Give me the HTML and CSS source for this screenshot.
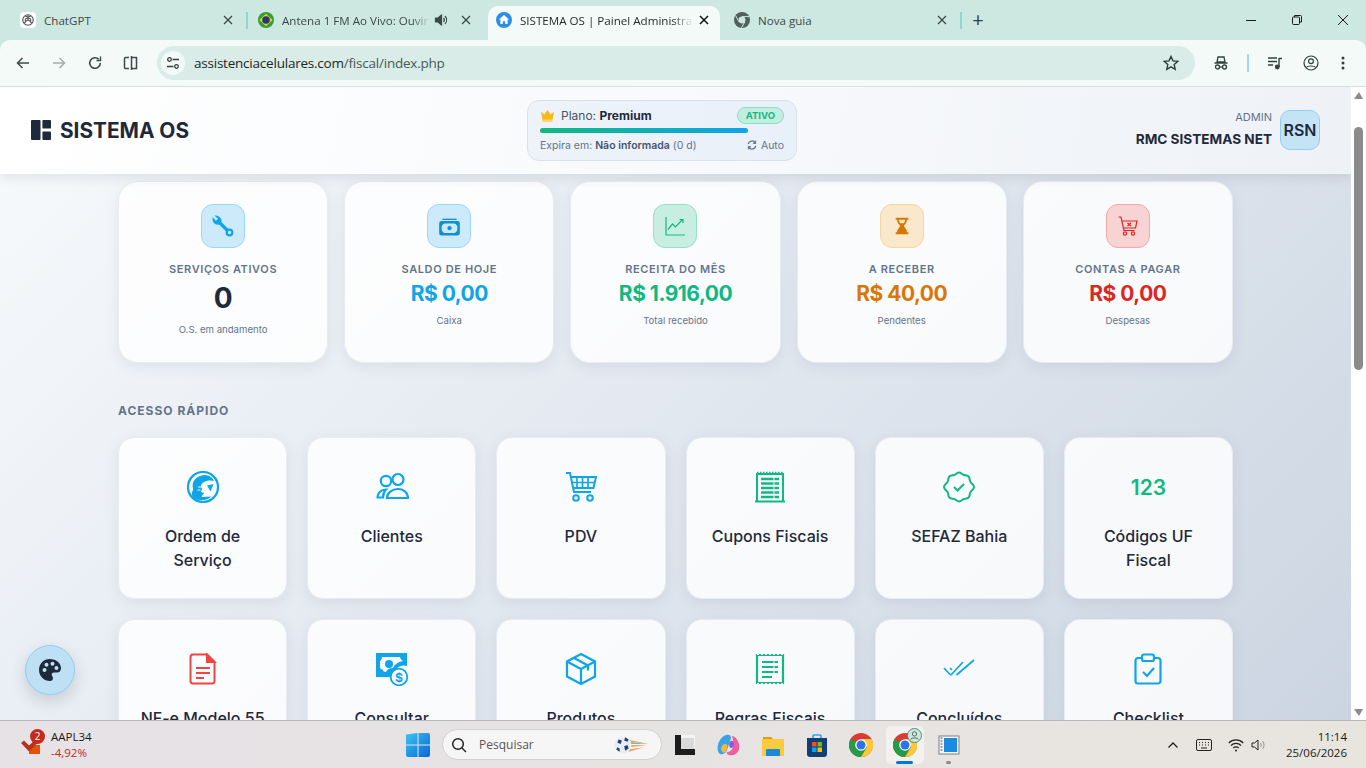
FILE: index.html
```html
<!DOCTYPE html>
<html lang="pt-BR">
<head>
<meta charset="utf-8">
<title>SISTEMA OS | Painel Administrativo</title>
<link rel="stylesheet" href="styles.css">
</head>
<body>
<div class="tabstrip">
  <div class="tab tab-sep">
    <span class="fav fav-white"><svg viewBox="0 0 16 16" width="14" height="14" fill="none" stroke="#555" stroke-width="1.3"><circle cx="8" cy="8" r="6"/><path d="M8 2v6l5 3M8 8l-5 3M5 3.5l6 3.5v4M11 3.5L5 7v4"/></svg></span>
    <span class="tab-title">ChatGPT</span>
    <svg class="tab-x" viewBox="0 0 10 10" width="10" height="10" fill="none" stroke="#3c4a47" stroke-width="1.3"><path d="m1 1 8 8M9 1 1 9"/></svg>
  </div>
  <div class="tab">
    <span class="fav"><svg viewBox="0 0 16 16" width="16" height="16"><circle cx="8" cy="8" r="8" fill="#2e9e3f"/><path d="M8 1.800 14.600 8 8 14.200 1.400 8z" fill="#f6d20e"/><circle cx="8" cy="8" r="3.800" fill="#26357f"/></svg></span>
    <span class="tab-title fade">Antena 1 FM Ao Vivo: Ouvir</span>
    <svg class="tab-audio" viewBox="0 0 14 14" width="14" height="14" fill="none" stroke="#3a4a47" stroke-width="1.200"><path d="M1.500 5v4h2.500l3.500 3V2L4 5z" fill="#3a4a47"/><path d="M9.500 5a3 3 0 0 1 0 4M11 3a6 6 0 0 1 0 8"/></svg>
    <svg class="tab-x" viewBox="0 0 10 10" width="10" height="10" fill="none" stroke="#3c4a47" stroke-width="1.300"><path d="m1 1 8 8M9 1 1 9"/></svg>
  </div>
  <div class="tab tab-active">
    <span class="fav"><svg viewBox="0 0 16 16" width="16" height="16"><circle cx="8" cy="8" r="8" fill="#2b8fe8"/><path d="M8 3 3 7.600h1.400V12h2.400V9.300h2.400V12h2.400V7.600H13z" fill="#fff"/></svg></span>
    <span class="tab-title fade">SISTEMA OS | Painel Administrativo</span>
    <svg class="tab-x" viewBox="0 0 10 10" width="10" height="10" fill="none" stroke="#111" stroke-width="1.500"><path d="m1 1 8 8M9 1 1 9"/></svg>
  </div>
  <div class="tab tab-sep">
    <span class="fav"><svg viewBox="0 0 16 16" width="16" height="16"><circle cx="8" cy="8" r="8" fill="#50605c"/><circle cx="8" cy="8" r="3.400" fill="#cde7e1"/><path d="M8 4.600h7M5 9.800 1.600 3.600M10.900 9.800 7.400 15.800" stroke="#cde7e1" stroke-width="1"/></svg></span>
    <span class="tab-title">Nova guia</span>
    <svg class="tab-x" viewBox="0 0 10 10" width="10" height="10" fill="none" stroke="#3c4a47" stroke-width="1.300"><path d="m1 1 8 8M9 1 1 9"/></svg>
  </div>
  <button class="newtab" type="button">+</button>
  <div class="winctl">
    <svg viewBox="0 0 12 12" width="12" height="12" stroke="#1c1c1c" fill="none"><path d="M1 6.500h10"/></svg>
    <svg viewBox="0 0 12 12" width="12" height="12" stroke="#1c1c1c" fill="none"><rect x="1.500" y="3" width="7" height="7.500" rx="1"/><path d="M3.500 3V1.500h6a1 1 0 0 1 1 1V8H8.500"/></svg>
    <svg viewBox="0 0 12 12" width="12" height="12" stroke="#1c1c1c" fill="none"><path d="M1 1l10 10M11 1 1 11"/></svg>
  </div>
</div>

<div class="toolbar">
  <div class="navbtns">
    <svg viewBox="0 0 16 16" width="16" height="16" fill="none" stroke="#3d4a47" stroke-width="1.500"><path d="M14 8H2.500M7.500 3 2.500 8l5 5"/></svg>
    <svg viewBox="0 0 16 16" width="16" height="16" fill="none" stroke="#a3aeab" stroke-width="1.500"><path d="M2 8h11.500M8.500 3l5 5-5 5"/></svg>
    <svg viewBox="0 0 16 16" width="16" height="16" fill="none" stroke="#3d4a47" stroke-width="1.600"><path d="M13.300 8a5.300 5.300 0 1 1-1.600-3.800"/><path d="M13.500 1.500v4h-4" stroke-width="1.400"/></svg>
    <svg viewBox="0 0 16 16" width="16" height="16" fill="none" stroke="#3d4a47" stroke-width="1.500"><path d="M6 2.500H2.500a1 1 0 0 0-1 1v9a1 1 0 0 0 1 1H6M8.500 1v14M8.500 2.500h5v11h-5"/></svg>
  </div>
  <div class="omnibox">
    <span class="chip"><svg viewBox="0 0 14 14" width="14" height="14" fill="none" stroke="#33413e" stroke-width="1.300"><circle cx="3.500" cy="3.500" r="1.800"/><path d="M6.500 3.500H13M1 10.500h6.500"/><circle cx="10.500" cy="10.500" r="1.800"/></svg></span>
    <span class="url"><span class="url-host">assistenciacelulares.com</span>/fiscal/index.php</span>
    <svg class="star" viewBox="0 0 16 16" width="16" height="16" fill="none" stroke="#2f3b38" stroke-width="1.400"><path d="m8 1.500 2 4.400 4.700.5-3.500 3.200 1 4.700L8 11.900l-4.200 2.400 1-4.700L1.300 6.400 6 5.900z"/></svg>
  </div>
  <div class="tbicons">
    <svg viewBox="0 0 16 16" width="16" height="16" fill="none" stroke="#33413e" stroke-width="1.300"><path d="M5 2h6l1 5H4zM1.500 8h13" /><circle cx="4.500" cy="12" r="2"/><circle cx="11.500" cy="12" r="2"/><path d="M6.500 12h3"/></svg>
    <span class="tbsep"></span>
    <svg class="tb-music" viewBox="0 0 16 16" width="16" height="16" fill="none" stroke="#33413e" stroke-width="1.400"><path d="M1 3h9M1 6.500h9M1 10h5M12 3.500h3M12 3v9"/><circle cx="10.300" cy="12" r="1.700" fill="#33413e"/></svg>
    <svg class="tb-prof" viewBox="0 0 16 16" width="16" height="16" fill="none" stroke="#33413e" stroke-width="1.200"><circle cx="8" cy="8" r="7"/><circle cx="8" cy="6.200" r="2.400"/><path d="M3.200 12.500c1.500-2 8-2 9.600 0"/></svg>
    <svg viewBox="0 0 4 16" width="4" height="16" fill="#33413e"><circle cx="2" cy="3" r="1.500"/><circle cx="2" cy="8" r="1.500"/><circle cx="2" cy="13" r="1.500"/></svg>
  </div>
</div>

<div class="viewport">
  <div class="page">
    <header class="apphead">
      <div class="brand">
        <svg viewBox="0 0 22 22" width="21" height="21" fill="#1e293b"><rect width="10" height="21" rx="1"/><rect x="12" width="9" height="9" rx="1"/><rect x="12" y="12" width="9" height="9" rx="1"/></svg>
        <span>SISTEMA OS</span>
      </div>
      <div class="plan">
        <div class="plan-top">
          <svg viewBox="0 0 16 14" width="15" height="13" fill="#fbb80f"><path d="M1 3l3.500 3L8 1l3.500 5L15 3l-1.500 8.500h-11zM2.500 12.500h11v1h-11z"/></svg>
          <span class="plan-name">Plano: <b>Premium</b></span>
          <span class="badge">ATIVO</span>
        </div>
        <div class="bar"></div>
        <div class="plan-foot">
          <span>Expira em: <b>Não informada</b> (0 d)</span>
          <span class="auto"><svg viewBox="0 0 12 12" width="10" height="10" fill="none" stroke="#64748b" stroke-width="1.500"><path d="M1.500 5A4.600 4.600 0 0 1 10 3.500M10.500 7A4.600 4.600 0 0 1 2 8.500"/><path d="M10.500.8v3.400H7.100M1.500 11.200V7.800h3.400" fill="#64748b" stroke-width="1"/></svg>Auto</span>
        </div>
      </div>
      <div class="user">
        <div class="user-text">
          <span class="role">ADMIN</span>
          <span class="uname">RMC SISTEMAS NET</span>
        </div>
        <div class="avatar">RSN</div>
      </div>
    </header>

    <main class="content">
      <section class="stats">
        <article class="stat">
          <div class="stat-ico ico-sky"><svg viewBox="0 0 24 24" width="24" height="24" fill="none" stroke="#0ea5e9"><path d="M8 8 16.500 16.500" stroke-width="3.200"/><path d="M3.500 1.500 7 4.800 5 6.800 1.700 3.300C1 6 2 9 4.500 10.300c1.500.7 3.500.7 5-.3 1.200-1.400 1.300-3.400.6-5C9 2.300 6.200 1 3.500 1.500z" fill="#0ea5e9" stroke="none"/><circle cx="18.500" cy="18.500" r="2.800" stroke-width="2.200"/></svg></div>
          <div class="stat-label">SERVIÇOS ATIVOS</div>
          <div class="stat-value big">0</div>
          <div class="stat-sub">O.S. em andamento</div>
        </article>
        <article class="stat">
          <div class="stat-ico ico-sky"><svg viewBox="0 0 22 22" width="21" height="21"><path d="M3.500 3.500h15" stroke="#0f8fd6" stroke-width="1.400"/><rect x="1.500" y="6.500" width="19" height="12.500" rx="1" fill="none" stroke="#0f8fd6" stroke-width="2.600"/><path d="M2 7h4L2 11zM20 7h-4l4 4zM2 18.500h4L2 14.500zM20 18.500h-4l4-4z" fill="#0f8fd6"/><circle cx="11" cy="12.700" r="2.300" fill="#0f8fd6"/></svg></div>
          <div class="stat-label">SALDO DE HOJE</div>
          <div class="stat-value c-sky">R$ 0,00</div>
          <div class="stat-sub">Caixa</div>
        </article>
        <article class="stat">
          <div class="stat-ico ico-green"><svg viewBox="0 0 22 22" width="22" height="22" fill="none" stroke="#10b981" stroke-width="1.200"><path d="M2 2v18h19"/><path d="M4 14.500 8.500 9l3 3 7-7.500M15.500 4.500h3.500V8" /></svg></div>
          <div class="stat-label">RECEITA DO MÊS</div>
          <div class="stat-value c-green">R$ 1.916,00</div>
          <div class="stat-sub">Total recebido</div>
        </article>
        <article class="stat">
          <div class="stat-ico ico-amber"><svg viewBox="0 0 22 22" width="20" height="20" fill="#d97706"><path d="M4 2h14v2h-1.500c0 3.500-2.500 5-3.500 7 1 2 3.500 3.500 3.500 7H18v2H4v-2h1.500c0-3.500 2.500-5 3.500-7-1-2-3.500-3.500-3.500-7H4zm3.500 2c.2 2 1 3 2 4h3c1-1 1.800-2 2-4z" fill-rule="evenodd"/></svg></div>
          <div class="stat-label">A RECEBER</div>
          <div class="stat-value c-amber">R$ 40,00</div>
          <div class="stat-sub">Pendentes</div>
        </article>
        <article class="stat">
          <div class="stat-ico ico-red"><svg viewBox="0 0 22 22" width="22" height="22" fill="none" stroke="#dc2626" stroke-width="1.200"><path d="M1.500 2h2.500l3 13.500h10.500M4.800 6H20l-1.500 7H6.500"/><circle cx="8" cy="18.500" r="1.700"/><circle cx="16" cy="18.500" r="1.700"/><path d="m10.500 8 3.500 3M14 8l-3.500 3" stroke-width="1.300"/></svg></div>
          <div class="stat-label">CONTAS A PAGAR</div>
          <div class="stat-value c-red">R$ 0,00</div>
          <div class="stat-sub">Despesas</div>
        </article>
      </section>

      <h2 class="section-title">ACESSO RÁPIDO</h2>

      <section class="quick">
        <a class="qcard">
          <div class="qico"><svg viewBox="0 0 32 32" width="32" height="32"><circle cx="16" cy="16" r="15" fill="none" stroke="#0ea5e9" stroke-width="2.200"/><path d="M6 26c-2-3-1-5 0-7 .500-2-1-3 0-7 1-4 6-8 12-8 4 0 8 3 9 6-3-1-8-.500-10 1-2 1-3.500 3-3 5l1 2-1 3 3 1c0 2-3 2-2 4l9-.500c-4 5-14 5-18 .500z" fill="#0ea5e9"/><path d="m20 14.500 6.500-1.500-3 7.500z" fill="#0ea5e9"/><path d="M11 16h3M10.500 19h3" stroke="#f8fafc" stroke-width="1"/></svg></div>
          <div class="qlabel">Ordem de Serviço</div>
        </a>
        <a class="qcard">
          <div class="qico"><svg viewBox="0 0 32 32" width="34" height="32" fill="none" stroke="#0ea5e9" stroke-width="2.200"><circle cx="10" cy="10" r="5.200"/><circle cx="22" cy="8.500" r="5.500"/><path d="M1.500 26.500c0-4 3-8 8.500-8-2 2-3 5-3 8zM11 27c0-5 5-9 11-9s10 4 10 9z"/></svg></div>
          <div class="qlabel">Clientes</div>
        </a>
        <a class="qcard">
          <div class="qico"><svg viewBox="0 0 32 32" width="32" height="32" fill="none" stroke="#0ea5e9" stroke-width="2"><path d="M1 2h4l4 19h17"/><path d="M5.500 6H31l-2.500 11H8"/><path d="M12 6v11M17.500 6v11M23 6v11M6.500 11.500h23.500" stroke-width="1.700"/><circle cx="11" cy="27" r="2.800"/><circle cx="25" cy="27" r="2.800"/></svg></div>
          <div class="qlabel">PDV</div>
        </a>
        <a class="qcard">
          <div class="qico"><svg viewBox="0 0 32 32" width="32" height="32" fill="none" stroke="#10b981" stroke-width="2"><path d="M3 30V3h26v27"/><path d="M3 1.500h26" stroke-width="1.500" stroke-dasharray="1.500 1.500"/><path d="M1 30.500h30" stroke-width="2"/><path d="M7 8h18M7 12.500h18M7 17h18M7 21.500h18M7 26h18" stroke-width="2.300"/><path d="M20 6v22" stroke="#f8fafc" stroke-width="1"/></svg></div>
          <div class="qlabel">Cupons Fiscais</div>
        </a>
        <a class="qcard">
          <div class="qico"><svg viewBox="0 0 32 32" width="32" height="32" fill="none" stroke="#10b981" stroke-width="2"><path d="M16 1.500c2 0 3 2 5 2.500s4 0 5 2 .500 3.500 1.500 5 3.500 2.500 3.500 5-2.500 3.500-3.500 5-.500 3-1.500 5-3 1.500-5 2-3 2.500-5 2.500-3-2-5-2.500-4 0-5-2-.500-3.500-1.500-5S1 18.500 1 16s2.500-3.500 3.500-5S5 8 6 6s3-1.500 5-2 3-2.500 5-2.500z"/><path d="m11 16 3.500 3.500L21 13"/></svg></div>
          <div class="qlabel">SEFAZ Bahia</div>
        </a>
        <a class="qcard">
          <div class="qico qnum">123</div>
          <div class="qlabel">Códigos UF Fiscal</div>
        </a>
        <a class="qcard">
          <div class="qico"><svg viewBox="0 0 32 32" width="32" height="32" fill="none" stroke="#ef4444" stroke-width="2"><path d="M6 1.500h14l7.500 7.500v19a2.500 2.500 0 0 1-2.500 2.500H6A2.500 2.500 0 0 1 3.500 28V4A2.500 2.500 0 0 1 6 1.500z"/><path d="M20 1.500V9h7.500z" fill="#ef4444"/><path d="M9 15h14M9 20h14M9 25h8"/></svg></div>
          <div class="qlabel">NF-e Modelo 55</div>
        </a>
        <a class="qcard">
          <div class="qico"><svg viewBox="0 0 34 34" width="34" height="34"><path d="M1 1h31v13c-6-2-13 2-14 11H1z" fill="#0ea5e9"/><path d="M7 5h18c0 2 2 3 3 4-5 1-8 3-10 7-2-.500-6 1-7 4-2 0-3-1-3-2-1-1-3-1-3-2V9c1 0 2-3 2-4z" fill="#f8fafc"/><circle cx="14" cy="12" r="4" fill="#0ea5e9"/><circle cx="24" cy="25" r="8.300" fill="#f8fafc" stroke="#0ea5e9" stroke-width="1.800"/><text x="24" y="29.500" class="svg-dollar">$</text></svg></div>
          <div class="qlabel">Consultar</div>
        </a>
        <a class="qcard">
          <div class="qico"><svg viewBox="0 0 32 32" width="32" height="32" fill="none" stroke="#0ea5e9" stroke-width="2.200"><path d="M16 1 30 8.500v15L16 31 2 23.500v-15zM2 8.500 16 16l14-7.500M16 16v15M9 5l14 7.500v5"/></svg></div>
          <div class="qlabel">Produtos</div>
        </a>
        <a class="qcard">
          <div class="qico"><svg viewBox="0 0 32 32" width="32" height="32" fill="none" stroke="#10b981" stroke-width="2.200"><path d="M3 2v28h26V2z"/><path d="M3 1.500h26M3 30.500h26" stroke="#f8fafc" stroke-width="1" stroke-dasharray="2 2"/><path d="M8 9h16M8 14h16M8 19h16M8 24h10"/><path d="M20 8v17" stroke="#f8fafc" stroke-width="1"/></svg></div>
          <div class="qlabel">Regras Fiscais</div>
        </a>
        <a class="qcard">
          <div class="qico"><svg viewBox="0 0 32 32" width="32" height="32" fill="none" stroke="#0ea5e9" stroke-width="1.700"><path d="m1 15 6 6.500M7 15l2 2M8 22 20 9M13.500 22 31 7"/><path d="M7 21.500 8 22"/></svg></div>
          <div class="qlabel">Concluídos</div>
        </a>
        <a class="qcard">
          <div class="qico"><svg viewBox="0 0 32 32" width="32" height="32" fill="none" stroke="#0ea5e9" stroke-width="2.200"><path d="M9 5H6a2.500 2.500 0 0 0-2.500 2.500V28A2.500 2.500 0 0 0 6 30.500h20a2.500 2.500 0 0 0 2.500-2.500V7.500A2.500 2.500 0 0 0 26 5h-3"/><rect x="10" y="1.500" width="12" height="6.500" rx="2"/><path d="m11 19 4 4 7-8"/></svg></div>
          <div class="qlabel">Checklist</div>
        </a>
      </section>
    </main>

    <button class="fab" type="button"><svg viewBox="0 0 24 24" width="24" height="24"><path d="M12 1C5.500 1 1 5.800 1 12s5 11 11 11c2 0 3-1.300 3-2.700 0-1.800-1.300-2.300-1.300-3.800 0-1.300 1-2 2.300-2h3c2.800 0 4-2 4-4.500C23 5 18 1 12 1z" fill="#1e293b"/><circle cx="6.500" cy="12" r="2" fill="#bde0f5"/><circle cx="8.500" cy="6.800" r="2" fill="#bde0f5"/><circle cx="14.500" cy="5.800" r="2" fill="#bde0f5"/><circle cx="18.500" cy="10" r="2" fill="#bde0f5"/></svg></button>
  </div>
  <div class="scrollbar">
    <span class="arrow-up"></span>
    <span class="thumb"></span>
    <span class="arrow-down"></span>
  </div>
</div>

<footer class="taskbar">
  <div class="widget">
    <span class="wg-ico">
      <svg viewBox="0 0 26 22" width="26" height="22"><rect x="9" y="12" width="11" height="9" fill="#e35205"/><path d="m1 10 3-2.500 5 5 10-9 2.500 2.500-12.500 12.500z" fill="#b8321a"/></svg>
      <span class="wg-badge">2</span>
    </span>
    <span class="wg-text"><span class="wg-sym">AAPL34</span><span class="wg-chg">-4,92%</span></span>
  </div>
  <div class="startlogo"><svg viewBox="0 0 24 24" width="24" height="24"><defs><linearGradient id="w" x1="0" y1="0" x2="1" y2="1"><stop offset="0" stop-color="#3ec3f5"/><stop offset="1" stop-color="#0668cf"/></linearGradient></defs><path d="M0 1.500 11.500 0v11.500H0zM12.500 0H22a2 2 0 0 1 2 2v9.500H12.500zM0 12.500h11.500V24H2a2 2 0 0 1-2-2zM12.500 12.500H24V22a2 2 0 0 1-2 2h-9.500z" fill="url(#w)"/></svg></div>
  <div class="search">
    <svg viewBox="0 0 16 16" width="16" height="16" fill="none" stroke="#222" stroke-width="1.500"><circle cx="7" cy="7" r="5.300"/><path d="m11 11 4 4"/></svg>
    <span class="search-text">Pesquisar</span>
    <svg class="search-art" viewBox="0 0 32 16" width="38" height="18"><path d="M12 3 31 7 14 5zM13 8l17 0-17 2zM12 12l15-2-14 4z" fill="#f59e63"/><path d="M13 5l17 2-16 0z" fill="#6fc1a0"/><circle cx="8" cy="8" r="7.500" fill="#e8edf3"/><path d="M4 3l3 1-1 3-3-1zM10 1l3 2-1 2-3-1zM9 9l3-1 1 3-3 2zM3 10l2 1v3L2 12z" fill="#24407a"/></svg>
  </div>
  <div class="apps">
    <span class="app"><svg viewBox="0 0 20 20" width="20" height="20"><rect width="20" height="20" fill="#f4f4f4"/><rect y="14" width="20" height="6" fill="#1d1d1d"/><rect width="6" height="20" fill="#1d1d1d"/><rect x="6" y="3" width="13" height="11" fill="#d9d9d9"/></svg></span>
    <span class="app"><svg viewBox="0 0 24 24" width="24" height="24"><path d="M9 2c3-1 5 0 5 3l-4 12c-1 3-4 5-7 4-3-2-3-8-1-12 1-3 4-6 7-7z" fill="#3aa3e6"/><path d="M15 3c3 0 6 4 7 8 1 5-1 10-6 11-4 1-7-1-6-3 3 0 5-2 6-5 1-4 0-8-1-11z" fill="#ef5f9d"/><path d="M5 18c-2-2 0-7 3-7s3 2 1 7c-1 2-3 2-4 0z" fill="#f5b63b"/><path d="M14 8c2-1 3 1 3 3s-1 4-3 4-3-6 0-7z" fill="#8a5be0"/></svg></span>
    <span class="app"><svg viewBox="0 0 24 24" width="26" height="24"><path d="M2 4h8l2 2H2z" fill="#d99e0c"/><rect x="1" y="6" width="22" height="17" fill="#fbcb3e"/><path d="M5 23v-6a1 1 0 0 1 1-1h12a1 1 0 0 1 1 1v6z" fill="#1d87d8"/></svg></span>
    <span class="app"><svg viewBox="0 0 24 24" width="24" height="24"><path d="M8 6V3a1 1 0 0 1 1-1h6a1 1 0 0 1 1 1v3" fill="none" stroke="#2aa8e0" stroke-width="1.600"/><path d="M2 5h20v16a3 3 0 0 1-3 3H5a3 3 0 0 1-3-3z" fill="#123f7a"/><rect x="7" y="9" width="4.500" height="4.500" fill="#f25022"/><rect x="12.500" y="9" width="4.500" height="4.500" fill="#7fba00"/><rect x="7" y="14.500" width="4.500" height="4.500" fill="#00a4ef"/><rect x="12.500" y="14.500" width="4.500" height="4.500" fill="#ffb900"/></svg></span>
    <span class="app"><svg viewBox="0 0 24 24" width="24" height="24"><circle cx="12" cy="12" r="12" fill="#d93c30"/><path d="M12 12 1.600 6A12 12 0 0 0 12 24l6-10z" fill="#249c46"/><path d="M12 6h10.500A12 12 0 0 1 12 24l6-10z" fill="#fbc933"/><circle cx="12" cy="12" r="5.800" fill="#fff"/><circle cx="12" cy="12" r="4.500" fill="#2a74e8"/></svg></span>
    <span class="app app-active"><svg viewBox="0 0 24 24" width="24" height="24"><circle cx="12" cy="12" r="12" fill="#d93c30"/><path d="M12 12 1.600 6A12 12 0 0 0 12 24l6-10z" fill="#249c46"/><path d="M12 6h10.500A12 12 0 0 1 12 24l6-10z" fill="#fbc933"/><circle cx="12" cy="12" r="5.800" fill="#fff"/><circle cx="12" cy="12" r="4.500" fill="#2a74e8"/></svg><svg class="app-prof" viewBox="0 0 16 16" width="15" height="15"><circle cx="8" cy="8" r="7.500" fill="#cfe5de" stroke="#4d8578"/><circle cx="8" cy="6.300" r="2.300" fill="none" stroke="#3e6f64"/><path d="M3.800 12c1-2 7.400-2 8.400 0" fill="none" stroke="#3e6f64"/></svg><span class="app-line"></span></span>
    <span class="app"><svg viewBox="0 0 24 24" width="24" height="24"><rect x="2" y="3" width="20" height="18" fill="#f4f6f8" stroke="#7b8087"/><rect x="7" y="5" width="13" height="14" fill="#1b8ae0"/><path d="M3.500 5h2M3.500 8h2M3.500 11h2M3.500 14h2M3.500 17h2" stroke="#555"/></svg><span class="app-dot"></span></span>
  </div>
  <div class="tray">
    <svg viewBox="0 0 12 12" width="12" height="12" fill="none" stroke="#222" stroke-width="1.300"><path d="m1.500 8.500 4.500-4.500 4.500 4.500"/></svg>
    <svg class="tray-kb" viewBox="0 0 16 12" width="16" height="12" fill="none" stroke="#222"><rect x=".5" y=".5" width="15" height="11" rx="1.500"/><path d="M3 3.500h1M6 3.500h1M9 3.500h1M12 3.500h1M3 6h1M6 6h1M9 6h1M12 6h1M5 9h6"/></svg>
    <svg class="tray-wifi" viewBox="0 0 16 14" width="16" height="14" fill="none" stroke="#222" stroke-width="1.200"><path d="M.8 5a10 10 0 0 1 14.400 0M3 7.500a7 7 0 0 1 10 0M5.300 10a3.700 3.700 0 0 1 5.400 0"/><circle cx="8" cy="12.500" r="1" fill="#222" stroke="none"/></svg>
    <svg class="tray-vol" viewBox="0 0 16 14" width="16" height="14" fill="none" stroke="#222"><path d="M1 5v4h2.500L7 12V2L3.500 5z"/><path d="M9.500 5a3 3 0 0 1 0 4M11.500 3a6 6 0 0 1 0 8" stroke="#999"/></svg>
  </div>
  <div class="clock"><span>11:14</span><span>25/06/2026</span></div>
</footer>
</body>
</html>
```
FILE: styles.css
```css
* { box-sizing: border-box; }
html, body { margin: 0; padding: 0; height: 768px; overflow: hidden; }
body { display: flex; flex-direction: column; width: 1366px; font-family: Inter, "Liberation Sans", sans-serif; background: #cde7e1; }

/* browser tabs */
.tabstrip { display: flex; align-items: flex-end; height: 40px; padding-left: 12px; background: #cde7e1; flex: none; }
.tab { position: relative; display: flex; align-items: center; width: 238px; height: 34px; padding: 0 17px 6px 8px; font-family: "Open Sans", "Noto Sans", sans-serif; font-size: 11.600px; color: #3c4a47; flex: none; }
.tab-active { background: #f3faf8; border-radius: 10px 10px 0 0; width: 232px; margin-right: 6px; padding-right: 11px; color: #1f2a28; }
.tab-sep::after { content: ""; position: absolute; right: 2px; top: 6px; width: 2px; height: 17px; background: #8ed9cc; }
.fav { width: 16px; height: 16px; flex: none; display: flex; align-items: center; justify-content: center; }
.fav-white { background: #fff; border-radius: 4px; }
.tab-title { margin-left: 8px; flex: 1; white-space: nowrap; overflow: hidden; min-width: 0; }
.fade { -webkit-mask-image: linear-gradient(90deg, #000 88%, transparent); mask-image: linear-gradient(90deg, #000 88%, transparent); }
.tab-audio { flex: none; margin: 0 7px 0 4px; }
.tab-x { flex: none; margin-left: 6px; }
.newtab { border: 0; background: none; padding: 0; margin: 0 0 10px 4px; width: 20px; height: 20px; font: 400 20px/20px "Open Sans", sans-serif; color: #33413e; }
.winctl { margin-left: auto; display: flex; align-self: stretch; align-items: center; gap: 34px; padding: 0 17px 0 0; }

/* toolbar */
.toolbar { display: flex; align-items: center; height: 47px; background: #f3faf8; border-radius: 10px 10px 0 0; border-bottom: 1px solid #d5e3df; flex: none; padding-bottom: 1px; }
.navbtns { display: flex; align-items: center; gap: 20px; padding-left: 15px; width: 157px; flex: none; }
.omnibox { display: flex; align-items: center; width: 1038px; height: 34px; border-radius: 17px; background: #d9ece7; padding: 0 16px 0 4px; flex: none; }
.chip { width: 24px; height: 24px; border-radius: 50%; background: #f3faf8; display: flex; align-items: center; justify-content: center; flex: none; }
.url { margin-left: 9px; font-family: "Open Sans", "Noto Sans", sans-serif; font-size: 13.500px; color: #4a5856; flex: 1; letter-spacing: -0.22px; }
.url-host { color: #1c2726; }
.tbicons { display: flex; align-items: center; padding-left: 18px; flex: 1; }
.tbsep { width: 2px; height: 18px; background: #9fe0d3; margin: 0 18px; }
.tb-music { margin-right: 20px; }
.tb-prof { margin-right: 22px; }

/* page */
.viewport { flex: 1; display: flex; min-height: 0; overflow: hidden; }
.page { position: relative; width: 1351px; flex: none; overflow: hidden; background: linear-gradient(135deg, #f8fafc 0%, #e2e8f0 50%, #cbd5e1 100%); }
.apphead { display: flex; align-items: center; justify-content: space-between; height: 87px; padding: 0 31px; background: linear-gradient(100deg, #ffffff, #f6f8fb 60%, #eef1f6); box-shadow: 0 3px 12px rgba(15, 23, 42, .1); position: relative; }
.brand { display: flex; align-items: center; gap: 8px; font-size: 20.800px; font-weight: 700; color: #1e293b; width: 158px; white-space: nowrap; }
.plan { width: 270px; height: 61px; margin-top: -1px; padding: 7px 12px 0; border: 1px solid #d8e1ec; border-radius: 12px; background: linear-gradient(100deg, #eef3f9, #e8f0f9); }
.plan-top { display: flex; align-items: center; height: 16px; font-size: 12px; color: #475569; }
.plan-name { margin-left: 6px; }
.plan-name b { color: #1e293b; font-weight: 700; }
.badge { margin-left: auto; padding: 0 8px; height: 17px; line-height: 15px; border: 1px solid #86dfc0; border-radius: 9px; background: #c2eee0; color: #10b981; font-size: 9.500px; font-weight: 700; }
.bar { width: 208px; height: 5px; margin-top: 4px; border-radius: 3px; background: linear-gradient(90deg, #10b981, #0ea5e9); }
.plan-foot { display: flex; justify-content: space-between; margin-top: 6px; font-size: 10.500px; color: #64748b; }
.plan-foot b { font-weight: 600; color: #475569; }
.auto { display: flex; align-items: center; gap: 4px; }
.user { display: flex; align-items: center; gap: 8px; width: 185px; justify-content: flex-end; margin-top: -1px; }
.user-text { display: flex; flex-direction: column; align-items: flex-end; white-space: nowrap; }
.role { font-size: 11px; color: #64748b; line-height: 14px; }
.uname { margin-top: 4px; font-size: 13.600px; font-weight: 700; color: #1e293b; line-height: 22px; }
.avatar { width: 40px; height: 40px; border-radius: 10px; background: #c4e4f6; border: 1px solid #8fd0f2; display: flex; align-items: center; justify-content: center; font-size: 16px; font-weight: 600; color: #1e293b; flex: none; }

.content { width: 1115px; margin-left: 118px; padding-top: 7px; }
.stats { display: grid; grid-template-columns: repeat(5, 1fr); gap: 16px; }
.stat { height: 182px; padding-top: 22px; display: flex; flex-direction: column; align-items: center; border: 1px solid #e8ecf2; border-radius: 20px; background: rgba(255, 255, 255, .82); box-shadow: 0 4px 14px rgba(100, 116, 139, .12); }
.stat-ico { width: 44px; height: 44px; border-radius: 12px; border: 1px solid; display: flex; align-items: center; justify-content: center; }
.ico-sky { background: #cdeafb; border-color: #9bd8f8; }
.ico-green { background: #c7eee0; border-color: #96e0c6; }
.ico-amber { background: #f9e8cb; border-color: #f8d59c; }
.ico-red { background: #f7d3d3; border-color: #f5a8a8; }
.stat-label { margin-top: 13px; font-size: 11px; line-height: 16px; font-weight: 600; color: #64748b; letter-spacing: .62px; white-space: nowrap; }
.stat-value { margin-top: 4px; font-size: 21px; line-height: 26px; font-weight: 700; letter-spacing: -.5px; white-space: nowrap; }
.big { font-size: 28px; line-height: 34px; letter-spacing: 0; color: #1e293b; }
.c-sky { color: #0ea5e9; }
.c-green { color: #10b981; }
.c-amber { color: #d97706; }
.c-red { color: #dc2626; }
.stat-sub { margin-top: 7px; font-size: 9.600px; line-height: 14px; color: #64748b; }
.big + .stat-sub { margin-top: 8px; }

.section-title { margin: 40px 0 18px; font-size: 12px; line-height: 16px; font-weight: 700; letter-spacing: 1px; color: #64748b; }
.quick { display: grid; grid-template-columns: repeat(6, 1fr); gap: 20px; grid-auto-rows: 162px; }
.qcard { display: flex; flex-direction: column; align-items: center; padding: 33px 16px 0; border: 1px solid #e8ecf2; border-radius: 16px; background: rgba(255, 255, 255, .82); box-shadow: 0 4px 14px rgba(100, 116, 139, .12); text-align: center; }
.qico { height: 32px; display: flex; align-items: center; justify-content: center; }
.qnum { font-size: 21px; font-weight: 600; color: #10b981; }
.qlabel { margin-top: 21px; font-size: 16px; line-height: 24px; font-weight: 450; color: #1e293b; }
.svg-dollar { font: 700 12px Inter, sans-serif; fill: #0ea5e9; text-anchor: middle; }

.fab { position: absolute; left: 25px; top: 558px; width: 50px; height: 50px; padding: 0; border-radius: 50%; background: #bde0f5; border: 1px solid #8fd0f2; box-shadow: 0 6px 16px rgba(15, 23, 42, .16); display: flex; align-items: center; justify-content: center; }

.scrollbar { position: relative; width: 15px; flex: none; background: #fff; }
.thumb { position: absolute; left: 3px; top: 40px; width: 9px; height: 243px; border-radius: 5px; background: #8b8b8b; }
.arrow-up, .arrow-down { position: absolute; left: 3px; width: 0; height: 0; border-left: 5px solid transparent; border-right: 4px solid transparent; }
.arrow-up { top: 5px; border-bottom: 7px solid #8b8b8b; }
.arrow-down { bottom: 4px; border-top: 7px solid #8b8b8b; }

/* taskbar */
.taskbar { display: flex; align-items: center; height: 48px; flex: none; border-top: 1px solid #b9b9b9; background: linear-gradient(90deg, #e6e2e6, #e6e3e3 50%, #e8e5df); font-family: "Open Sans", "Noto Sans", sans-serif; color: #1a1a1a; }
.widget { display: flex; align-items: center; width: 406px; padding-left: 20px; flex: none; }
.wg-ico { position: relative; width: 31px; height: 26px; display: block; margin-top: 2px; }
.wg-badge { position: absolute; left: 10px; top: -4px; width: 15px; height: 15px; line-height: 15px; border-radius: 50%; background: #c42b1c; color: #fff; font-size: 10px; text-align: center; }
.wg-text { display: flex; flex-direction: column; font-size: 11.500px; line-height: 16px; }
.wg-chg { color: #c42b1c; }
.startlogo { width: 24px; height: 24px; flex: none; }
.search { display: flex; align-items: center; width: 220px; height: 31px; margin-left: 12px; padding: 0 10px 0 8px; border: 1px solid #d4d1d1; border-radius: 16px; background: #f7f6f6; flex: none; }
.search-text { margin-left: 12px; font-size: 12px; color: #555; flex: 1; }
.search-art { flex: none; }
.apps { display: flex; align-items: center; margin-left: 1px; flex: none; }
.app { position: relative; width: 44px; height: 38px; display: flex; align-items: center; justify-content: center; flex: none; }
.app-active { background: #f3f1ef; border-radius: 5px; width: 38px; margin: 0 3px; }
.app-prof { position: absolute; right: 2px; top: 2px; }
.app-line { position: absolute; left: 10px; bottom: 0; width: 17px; height: 3px; border-radius: 2px; background: #0078d4; }
.app-dot { position: absolute; left: 19px; bottom: 0; width: 5px; height: 3px; border-radius: 2px; background: #8a8a8a; }
.tray { display: flex; align-items: center; margin-left: 196px; flex: none; }
.tray-kb { margin-left: 17px; }
.tray-wifi { margin-left: 16px; }
.tray-vol { margin-left: 7px; }
.clock { display: flex; flex-direction: column; align-items: flex-end; margin-left: auto; padding-right: 19px; font-size: 11.500px; line-height: 16px; }
```
